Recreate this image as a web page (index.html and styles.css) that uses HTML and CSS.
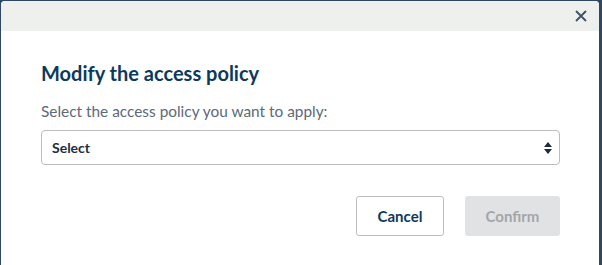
FILE: index.html
```html
<!DOCTYPE html>
<html lang="en">
  <head>
    <meta charset="UTF-8" />
    <title>Modify the access policy</title>
    <link rel="stylesheet" href="styles.css">
  </head>
  <body>
    <div class="modal">
      <div class="modal-header">
        <button class="close-button" aria-label="Close">
          <svg width="12" height="12" viewBox="0 0 12 12">
            <path d="M1 1 L11 11 M11 1 L1 11" stroke="#3f5164" stroke-width="1.8" fill="none" />
          </svg>
        </button>
      </div>
      <div class="modal-body">
        <h2 class="modal-title">Modify the access policy</h2>
        <label for="policy" class="field-label">Select the access policy you want to apply:</label>
        <div class="select-wrap">
          <select id="policy" class="select-field">
            <option>Select</option>
          </select>
          <svg class="select-arrows" width="8" height="12" viewBox="0 0 8 12">
            <path d="M4 0 L8 5 L0 5 Z M0 7 L8 7 L4 12 Z" fill="#1d2d3e" />
          </svg>
        </div>
      </div>
      <div class="modal-footer">
        <button class="button button-secondary">Cancel</button>
        <button class="button button-primary" disabled>Confirm</button>
      </div>
    </div>
  </body>
</html>
```

FILE: styles.css
```css
body {
  margin: 0;
  height: 265px;
  overflow: hidden;
  background-color: #2e4863;
  font-family: "Source Sans Pro", Lato, "Open Sans", sans-serif;
}
.modal {
  margin: 1px 3px 0 1px;
  height: 264px;
  background-color: #ffffff;
  border-radius: 4px 4px 0 0;
  overflow: hidden;
}
.modal-header {
  display: flex;
  justify-content: flex-end;
  align-items: center;
  height: 30px;
  padding-right: 8px;
  background-color: #edf0ec;
}
.close-button {
  display: flex;
  align-items: center;
  justify-content: center;
  width: 20px;
  height: 20px;
  padding: 0;
  border: none;
  background: none;
  cursor: pointer;
}
.modal-body {
  padding: 30px 39px 0 40px;
}
.modal-title {
  margin: 0 0 17px;
  font-size: 20px;
  font-weight: 700;
  color: #0b3a5e;
}
.field-label {
  display: block;
  margin-bottom: 10px;
  font-size: 15.4px;
  color: #5d6978;
}
.select-wrap {
  position: relative;
}
.select-field {
  display: block;
  width: 100%;
  height: 35px;
  padding: 0 10px;
  appearance: none;
  border: 1px solid #bcbcbc;
  border-radius: 4px;
  background-color: #ffffff;
  font-family: inherit;
  font-size: 14px;
  font-weight: 700;
  color: #1d2d3e;
}
.select-arrows {
  position: absolute;
  right: 8px;
  top: 12px;
  pointer-events: none;
}
.modal-footer {
  display: flex;
  justify-content: flex-end;
  gap: 21px;
  padding: 31px 39px 0 0;
}
.button {
  height: 40px;
  padding: 0 20px;
  border-radius: 3px;
  font-family: inherit;
  font-size: 15px;
  font-weight: 700;
  cursor: pointer;
}
.button-secondary {
  width: 88px;
  border: 1px solid #bdbdbd;
  background-color: #ffffff;
  color: #0b3a5e;
}
.button-primary {
  width: 95px;
  border: none;
  background-color: #e1e2e3;
  color: #a2a6aa;
}
.button-primary:disabled {
  cursor: not-allowed;
}
```
